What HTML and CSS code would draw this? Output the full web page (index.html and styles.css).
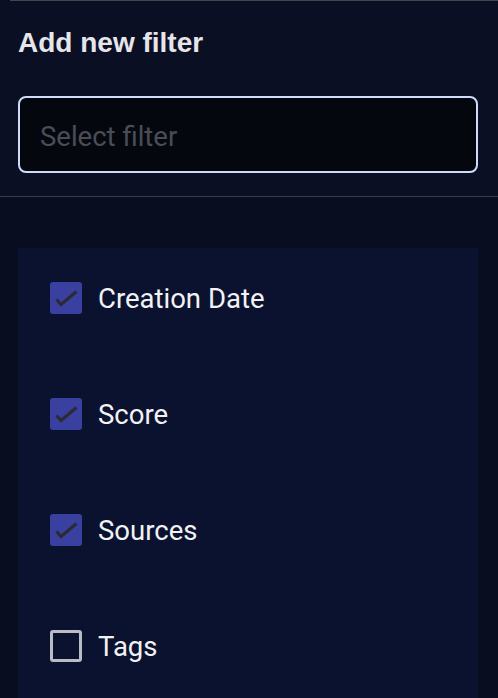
FILE: index.html
```html
<!DOCTYPE html>
<html>
<head>
<meta charset="utf-8">
<link rel="stylesheet" href="styles.css">
</head>
<body>
<div class="top-rule"></div>
<section class="header">
  <h1 class="title">Add new filter</h1>
  <div class="select">
    <span class="placeholder">Select filter</span>
  </div>
</section>
<section class="content">
  <div class="card">
    <label class="row">
      <span class="box checked"><svg viewBox="0 0 32 32" width="32" height="32"><polyline points="6.5,17.5 11,22.5 26.5,9.5" fill="none" stroke="#2a2b36" stroke-width="3.2"/></svg></span>
      <span class="label">Creation Date</span>
    </label>
    <label class="row">
      <span class="box checked"><svg viewBox="0 0 32 32" width="32" height="32"><polyline points="6.5,17.5 11,22.5 26.5,9.5" fill="none" stroke="#2a2b36" stroke-width="3.2"/></svg></span>
      <span class="label">Score</span>
    </label>
    <label class="row">
      <span class="box checked"><svg viewBox="0 0 32 32" width="32" height="32"><polyline points="6.5,17.5 11,22.5 26.5,9.5" fill="none" stroke="#2a2b36" stroke-width="3.2"/></svg></span>
      <span class="label">Sources</span>
    </label>
    <label class="row">
      <span class="box"></span>
      <span class="label">Tags</span>
    </label>
  </div>
</section>
</body>
</html>
```
FILE: styles.css
```css
html, body {
  margin: 0;
  padding: 0;
}
body {
  background: #080d20;
  width: 498px;
  height: 698px;
  overflow: hidden;
  font-family: Roboto, "Noto Sans", sans-serif;
}
.top-rule {
  margin-left: 10px;
  height: 1px;
  background: #45464b;
}
.header {
  background: #0a0f24;
  padding: 0 20px 23px 18px;
  border-bottom: 1px solid #383b48;
}
.title {
  margin: 0;
  padding-top: 27px;
  font-family: "Liberation Sans", Arial, sans-serif;
  font-weight: 700;
  font-size: 28px;
  line-height: 30px;
  color: #e6e6ea;
}
.select {
  margin-top: 38px;
  border: 2px solid #cfdbf7;
  border-radius: 8px;
  background: #05070f;
  display: flex;
  align-items: center;
  padding: 3px 0 0 20px;
  box-sizing: border-box;
  height: 77px;
}
.placeholder {
  font-size: 27.5px;
  color: #4a4c57;
}
.content {
  padding: 51px 20px 0 18px;
}
.card {
  background: #0a1230;
  padding: 18px 32px 40px;
  display: flex;
  flex-direction: column;
  gap: 52px;
}
.row {
  height: 64px;
  display: flex;
  align-items: center;
  gap: 16px;
}
.box {
  width: 32px;
  height: 32px;
  box-sizing: border-box;
  border-radius: 3px;
  border: 3px solid #b9bcc5;
  display: block;
}
.box.checked {
  border: none;
  background: #3a40a0;
}
.box svg {
  display: block;
}
.label {
  font-size: 27.5px;
  color: #f2f2f4;
}
```
